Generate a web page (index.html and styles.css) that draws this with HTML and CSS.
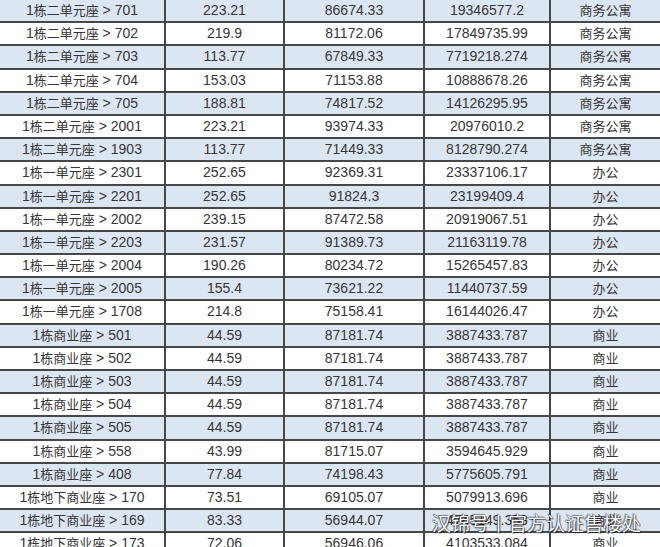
FILE: index.html
```html
<!DOCTYPE html>
<html lang="zh">
<head>
<meta charset="utf-8">
<title>房源价格表</title>
<link rel="stylesheet" href="styles.css">
</head>
<body>
<div class="sheet">
  <div class="grid">
    <div class="c b">1<span class="zh">栋二单元座</span> &gt; 701</div><div class="c b">223.21</div><div class="c b">86674.33</div><div class="c b">19346577.2</div><div class="c b zh">商务公寓</div>
    <div class="c">1<span class="zh">栋二单元座</span> &gt; 702</div><div class="c">219.9</div><div class="c">81172.06</div><div class="c">17849735.99</div><div class="c zh">商务公寓</div>
    <div class="c b">1<span class="zh">栋二单元座</span> &gt; 703</div><div class="c b">113.77</div><div class="c b">67849.33</div><div class="c b">7719218.274</div><div class="c b zh">商务公寓</div>
    <div class="c">1<span class="zh">栋二单元座</span> &gt; 704</div><div class="c">153.03</div><div class="c">71153.88</div><div class="c">10888678.26</div><div class="c zh">商务公寓</div>
    <div class="c b">1<span class="zh">栋二单元座</span> &gt; 705</div><div class="c b">188.81</div><div class="c b">74817.52</div><div class="c b">14126295.95</div><div class="c b zh">商务公寓</div>
    <div class="c">1<span class="zh">栋二单元座</span> &gt; 2001</div><div class="c">223.21</div><div class="c">93974.33</div><div class="c">20976010.2</div><div class="c zh">商务公寓</div>
    <div class="c b">1<span class="zh">栋二单元座</span> &gt; 1903</div><div class="c b">113.77</div><div class="c b">71449.33</div><div class="c b">8128790.274</div><div class="c b zh">商务公寓</div>
    <div class="c">1<span class="zh">栋一单元座</span> &gt; 2301</div><div class="c">252.65</div><div class="c">92369.31</div><div class="c">23337106.17</div><div class="c zh">办公</div>
    <div class="c b">1<span class="zh">栋一单元座</span> &gt; 2201</div><div class="c b">252.65</div><div class="c b">91824.3</div><div class="c b">23199409.4</div><div class="c b zh">办公</div>
    <div class="c">1<span class="zh">栋一单元座</span> &gt; 2002</div><div class="c">239.15</div><div class="c">87472.58</div><div class="c">20919067.51</div><div class="c zh">办公</div>
    <div class="c b">1<span class="zh">栋一单元座</span> &gt; 2203</div><div class="c b">231.57</div><div class="c b">91389.73</div><div class="c b">21163119.78</div><div class="c b zh">办公</div>
    <div class="c">1<span class="zh">栋一单元座</span> &gt; 2004</div><div class="c">190.26</div><div class="c">80234.72</div><div class="c">15265457.83</div><div class="c zh">办公</div>
    <div class="c b">1<span class="zh">栋一单元座</span> &gt; 2005</div><div class="c b">155.4</div><div class="c b">73621.22</div><div class="c b">11440737.59</div><div class="c b zh">办公</div>
    <div class="c">1<span class="zh">栋一单元座</span> &gt; 1708</div><div class="c">214.8</div><div class="c">75158.41</div><div class="c">16144026.47</div><div class="c zh">办公</div>
    <div class="c b">1<span class="zh">栋商业座</span> &gt; 501</div><div class="c b">44.59</div><div class="c b">87181.74</div><div class="c b">3887433.787</div><div class="c b zh">商业</div>
    <div class="c">1<span class="zh">栋商业座</span> &gt; 502</div><div class="c">44.59</div><div class="c">87181.74</div><div class="c">3887433.787</div><div class="c zh">商业</div>
    <div class="c b">1<span class="zh">栋商业座</span> &gt; 503</div><div class="c b">44.59</div><div class="c b">87181.74</div><div class="c b">3887433.787</div><div class="c b zh">商业</div>
    <div class="c">1<span class="zh">栋商业座</span> &gt; 504</div><div class="c">44.59</div><div class="c">87181.74</div><div class="c">3887433.787</div><div class="c zh">商业</div>
    <div class="c b">1<span class="zh">栋商业座</span> &gt; 505</div><div class="c b">44.59</div><div class="c b">87181.74</div><div class="c b">3887433.787</div><div class="c b zh">商业</div>
    <div class="c">1<span class="zh">栋商业座</span> &gt; 558</div><div class="c">43.99</div><div class="c">81715.07</div><div class="c">3594645.929</div><div class="c zh">商业</div>
    <div class="c b">1<span class="zh">栋商业座</span> &gt; 408</div><div class="c b">77.84</div><div class="c b">74198.43</div><div class="c b">5775605.791</div><div class="c b zh">商业</div>
    <div class="c">1<span class="zh">栋地下商业座</span> &gt; 170</div><div class="c">73.51</div><div class="c">69105.07</div><div class="c">5079913.696</div><div class="c zh">商业</div>
    <div class="c b">1<span class="zh">栋地下商业座</span> &gt; 169</div><div class="c b">83.33</div><div class="c b">56944.07</div><div class="c b">4745149.353</div><div class="c b zh">商业</div>
    <div class="c">1<span class="zh">栋地下商业座</span> &gt; 173</div><div class="c">72.06</div><div class="c">56946.06</div><div class="c">4103533.084</div><div class="c zh">商业</div>
  </div>
  <div class="watermark">汉锦号丨官方认证售楼处</div>
</div>
</body>
</html>
```

FILE: styles.css
```css
html, body {
  margin: 0;
  padding: 0;
  background: #ffffff;
}

.sheet {
  position: relative;
  width: 660px;
  height: 547px;
  overflow: hidden;
}

.grid {
  display: grid;
  grid-template-columns: 164px 117px 138px 124px 109px;
  grid-auto-rows: 21.2px;
  column-gap: 2px;
  row-gap: 2px;
  background: #474747;
  width: 660px;
  padding-bottom: 2px;
}

.c {
  background: #ffffff;
  color: #363636;
  font-family: "Liberation Sans", "Noto Sans CJK SC", sans-serif;
  font-size: 14px;
  line-height: 20px;
  text-align: center;
  white-space: nowrap;
  overflow: hidden;
}

.c.b {
  background: #dce6f2;
}

.zh {
  font-family: "Noto Sans CJK SC", sans-serif;
  font-size: 13px;
}

.c.zh {
  line-height: 19px;
}

.watermark {
  position: absolute;
  left: 432px;
  top: 510px;
  font-family: "Noto Sans CJK SC", sans-serif;
  font-size: 19px;
  line-height: 26px;
  color: #ffffff;
  text-shadow: 0 0 1px #000, 1px 1px 1px rgba(0,0,0,0.6), -1px -1px 1px rgba(0,0,0,0.4);
}
```
